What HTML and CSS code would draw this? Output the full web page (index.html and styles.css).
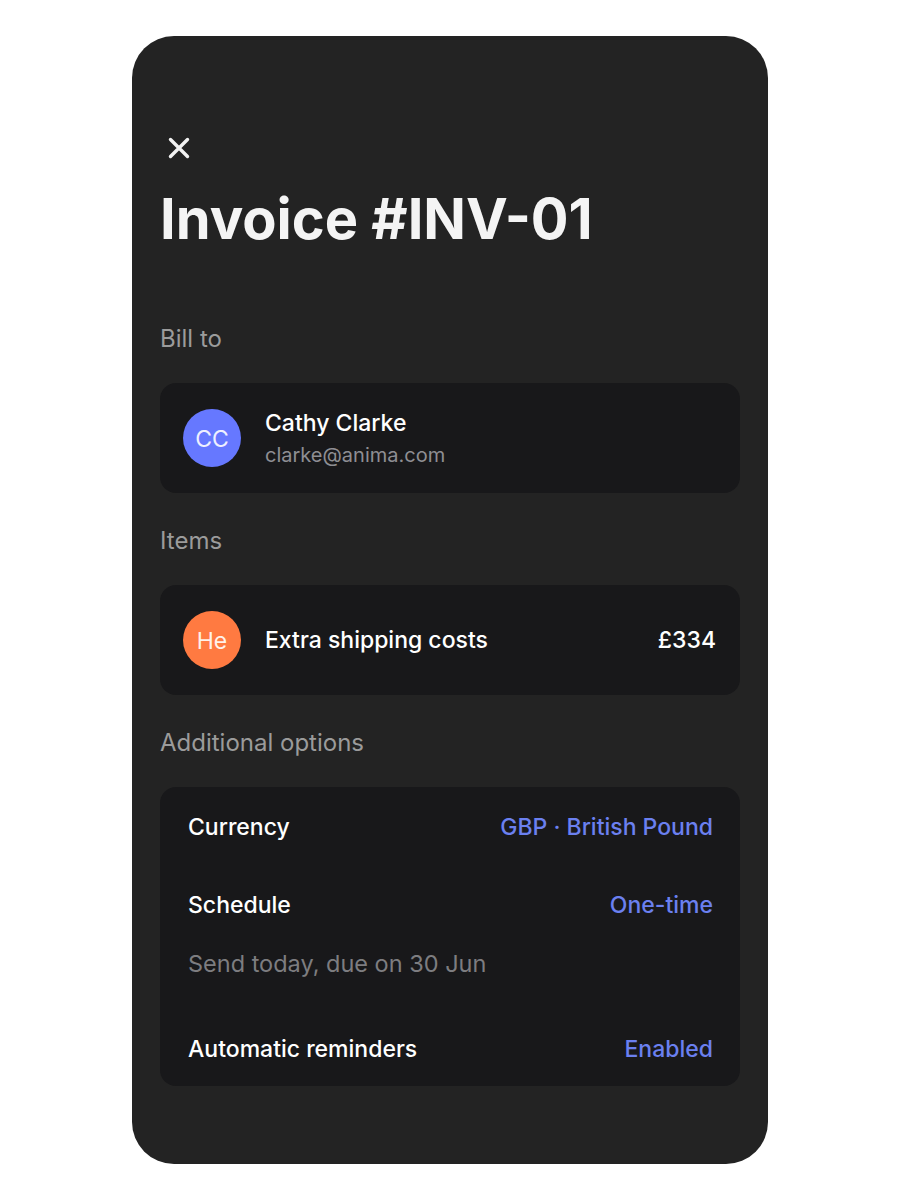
FILE: index.html
```html
<!DOCTYPE html>
<html lang="en">
<head>
    <meta charset="UTF-8">
    <title>Invoice #INV-01</title>
    <link rel="stylesheet" href="styles.css">
</head>
<body>
    <main class="phone">
        <button class="close" aria-label="Close">
            <svg width="24" height="24" viewBox="0 0 24 24" fill="none" stroke="#f2f2f2" stroke-width="3.4" stroke-linecap="round">
                <path d="M3.5 3.5L20.5 20.5M20.5 3.5L3.5 20.5"/>
            </svg>
        </button>
        <h1 class="title">Invoice #INV-01</h1>

        <section class="group">
            <h3 class="label">Bill to</h3>
            <div class="card row">
                <div class="avatar blue">CC</div>
                <div class="who">
                    <div class="name">Cathy Clarke</div>
                    <div class="email">clarke@anima.com</div>
                </div>
            </div>
        </section>

        <section class="group">
            <h3 class="label">Items</h3>
            <div class="card row">
                <div class="avatar orange">He</div>
                <div class="name grow">Extra shipping costs</div>
                <div class="price">£334</div>
            </div>
        </section>

        <section class="group">
            <h3 class="label">Additional options</h3>
            <div class="card options">
                <div class="opt">
                    <span>Currency</span>
                    <span class="link">GBP · British Pound</span>
                </div>
                <div class="opt schedule">
                    <span>Schedule</span>
                    <span class="link">One-time</span>
                </div>
                <div class="opt sub">Send today, due on 30 Jun</div>
                <div class="opt reminders">
                    <span>Automatic reminders</span>
                    <span class="link">Enabled</span>
                </div>
            </div>
        </section>
    </main>
</body>
</html>
```

FILE: styles.css
```css
body{
    margin: 0;
    background: #ffffff;
    font-family: "Inter", "Helvetica Neue", "Roboto", sans-serif;
    color: #ffffff;
}
.phone{
    width: 636px;
    height: 1128px;
    box-sizing: border-box;
    margin: 36px auto 0;
    padding: 100px 28px 0;
    background: #232323;
    border-radius: 42px;
    display: flex;
    flex-direction: column;
}
.close{
    width: 24px;
    height: 24px;
    padding: 0;
    margin-left: 7px;
    border: none;
    background: transparent;
    display: block;
}
.close svg{
    display: block;
}
.title{
    margin: 26px 0 0;
    font-size: 56px;
    line-height: 67px;
    font-weight: 700;
    color: #f4f4f4;
}
.group{
    display: flex;
    flex-direction: column;
}
.label{
    margin: 0 0 30px;
    font-size: 24px;
    line-height: 28px;
    font-weight: 400;
    color: #9b9b9b;
}
.title + .group .label{
    margin-top: 72px;
}
.group + .group .label{
    margin-top: 34px;
}
.card{
    background: #18181a;
    border-radius: 16px;
}
.card.row{
    height: 110px;
    box-sizing: border-box;
    padding: 0 24px 0 23px;
    display: flex;
    align-items: center;
}
.avatar{
    width: 58px;
    height: 58px;
    border-radius: 50%;
    flex: none;
    display: flex;
    align-items: center;
    justify-content: center;
    padding-top: 2px;
    box-sizing: border-box;
    font-size: 23px;
    color: #eef0ff;
    margin-right: 24px;
}
.avatar.blue{
    background: #6678ff;
}
.avatar.orange{
    background: #ff7a41;
    color: #fff1ea;
}
.name{
    font-size: 23px;
    line-height: 28px;
    font-weight: 500;
    color: #ffffff;
}
.email{
    margin-top: 6px;
    font-size: 20px;
    line-height: 24px;
    color: #8e8e93;
}
.grow{
    flex: 1;
}
.price{
    font-size: 23px;
    line-height: 28px;
    font-weight: 500;
}
.card.options{
    padding: 24px 27px 21px 28px;
}
.opt{
    height: 32px;
    display: flex;
    justify-content: space-between;
    align-items: center;
    font-size: 23px;
    font-weight: 500;
    color: #ffffff;
}
.opt .link{
    color: #6b80f0;
}
.opt.schedule{
    margin-top: 46px;
}
.opt.sub{
    margin-top: 26px;
    font-size: 23.5px;
    font-weight: 400;
    color: #7d7d80;
}
.opt.reminders{
    margin-top: 54px;
}
```
